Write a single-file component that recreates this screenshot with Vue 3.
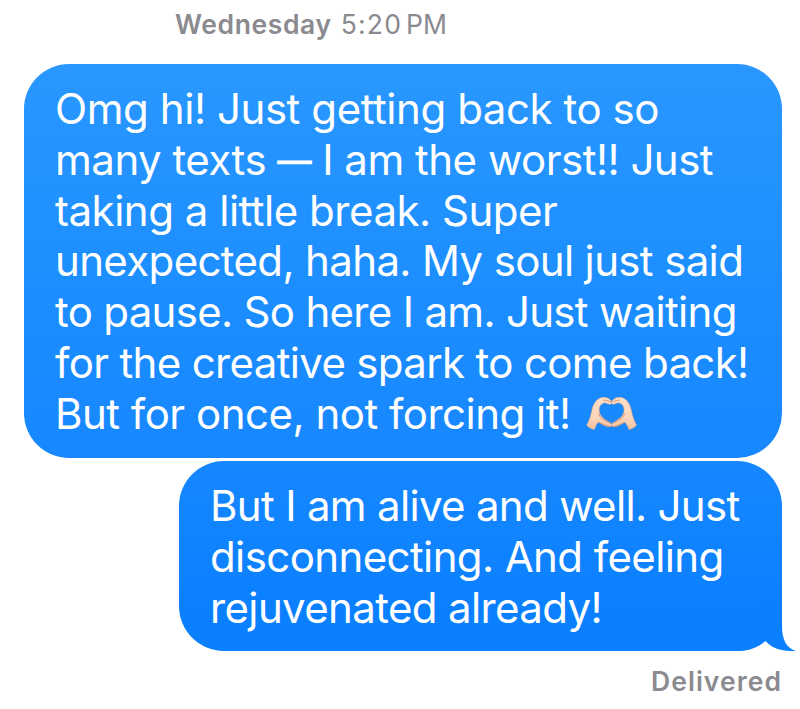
<script setup>
const first = [
  { parts: ['Omg hi! Just getting back to so'], spacing: -0.43 },
  { parts: ['many texts ', '—', ' I am the worst!! Just'], spacing: -0.5 },
  { parts: ['taking a little break. Super'], spacing: -0.48 },
  { parts: ['unexpected, haha. My soul just said'], spacing: -0.64 },
  { parts: ['to pause. So here I am. Just waiting'], spacing: -0.69 },
  { parts: ['for the creative spark to come back!'], spacing: -0.66 },
  { parts: ['But for once, not forcing it!'], spacing: -0.5, hands: true },
]
const second = [
  { parts: ['But I am alive and well. Just'], spacing: -0.68 },
  { parts: ['disconnecting. And feeling'], spacing: -0.6 },
  { parts: ['rejuvenated already!'], spacing: -0.63 },
]
</script>

<template>
  <main class="thread">
    <header class="stamp"><strong>Wednesday</strong><span class="time">5:20</span><span>PM</span></header>
    <section class="bubble bubble-first">
      <div v-for="(line, i) in first" :key="i" class="line">
        <span :style="{ letterSpacing: line.spacing + 'px' }"><span v-for="part in line.parts" :key="part" :class="{ dash: part === '—' }">{{ part }}</span></span>
        <svg v-if="line.hands" class="hands" width="52" height="34" viewBox="0 0 52 34">
          <defs>
            <linearGradient id="skin" x1="0" y1="0" x2="0" y2="1">
              <stop offset="0" stop-color="#fde0c8" />
              <stop offset=".6" stop-color="#fbd5bb" />
              <stop offset="1" stop-color="#f3c2a2" />
            </linearGradient>
            <g id="hand">
              <path fill="url(#skin)" stroke="#dfa280" stroke-width=".5" d="M.6 28C3.200 24 4.800 19 5.800 13.500C7 7 10.500 2 15.500 .5C19.500 -.5 23.500 1.500 25.200 4C26.200 5.700 25.600 7.200 23.900 7.300C21.600 7.300 20 5.300 17.800 5.900C14 7.200 12.600 10.500 13.400 15C14.400 20.200 19.500 22.800 24.500 25.900C26.200 26.900 26.100 29 24.500 29.700C21 30.200 16.500 27.800 12.600 25.200C10.400 26.200 9.600 29.500 8.400 32.600C5.400 32.200 2.400 30.500 .6 28Z" />
              <path fill="none" stroke="#cf8762" stroke-width=".8" d="M17.200 3.200C19.800 2.800 22.500 3.900 25 5.100M12.600 16.500C14 21 18.500 23.500 24.800 26.400M12.600 25.400C17 27 21 29.500 24.500 29.600" />
            </g>
          </defs>
          <use href="#hand" />
          <use href="#hand" transform="matrix(-1 0 0 1 51.200 0)" />
        </svg>
      </div>
    </section>
    <section class="bubble bubble-second">
      <div v-for="(line, i) in second" :key="i" class="line">
        <span :style="{ letterSpacing: line.spacing + 'px' }">{{ line.parts[0] }}</span>
      </div>
      <svg class="tail" width="60" height="55" viewBox="0 0 60 55">
        <path fill="#0b80ff" d="M1 55C12 55 21 52 29.500 45C37 53 46 55.700 59.800 54.700C50 52 46 43 46 30V0H20Z" />
      </svg>
    </section>
    <footer class="status">Delivered</footer>
  </main>
</template>

<style>
body { background: #fff; }
</style>

<style scoped>
.thread {
  box-sizing: border-box;
  width: 800px;
  height: 709px;
  padding: 8px 18px 0 24px;
  display: flex;
  flex-direction: column;
  overflow: hidden;
  font-family: Inter, "Liberation Sans", sans-serif;
}
.stamp {
  height: 56px;
  padding-left: 151px;
  font-size: 26.5px;
  line-height: 32px;
  color: #8a8a8f;
  white-space: pre;
  display: flex;
}
.stamp strong { font-weight: 600; letter-spacing: 0.6px; margin-right: 9px; }
.time { letter-spacing: 1.2px; margin-right: 4px; }
.bubble {
  box-sizing: border-box;
  position: relative;
  border-radius: 45px;
  color: #fff;
  font-size: 42px;
}
.bubble-first {
  height: 394px;
  padding: 20px 0 0 31px;
  background: linear-gradient(#2997ff, #1e8fff 50%, #1687ff);
}
.bubble-second {
  align-self: flex-end;
  width: 603px;
  height: 190px;
  margin-top: 3px;
  padding: 20px 0 0 31px;
  background: linear-gradient(#1687ff, #0b80ff 75%);
}
.line {
  height: 50.83px;
  line-height: 50.83px;
  white-space: pre;
  display: flex;
  align-items: center;
}
.dash { font-size: 34px; line-height: 1; vertical-align: 2px; -webkit-text-stroke: 0.8px #fff; }
.hands { margin-left: 15px; flex: none; }
.tail { position: absolute; right: -14px; bottom: 0; }
.status {
  align-self: flex-end;
  margin-top: 14px;
  font-size: 26.5px;
  line-height: 32px;
  font-weight: 600;
  letter-spacing: 1.05px;
  color: #8a8a8f;
}
</style>
